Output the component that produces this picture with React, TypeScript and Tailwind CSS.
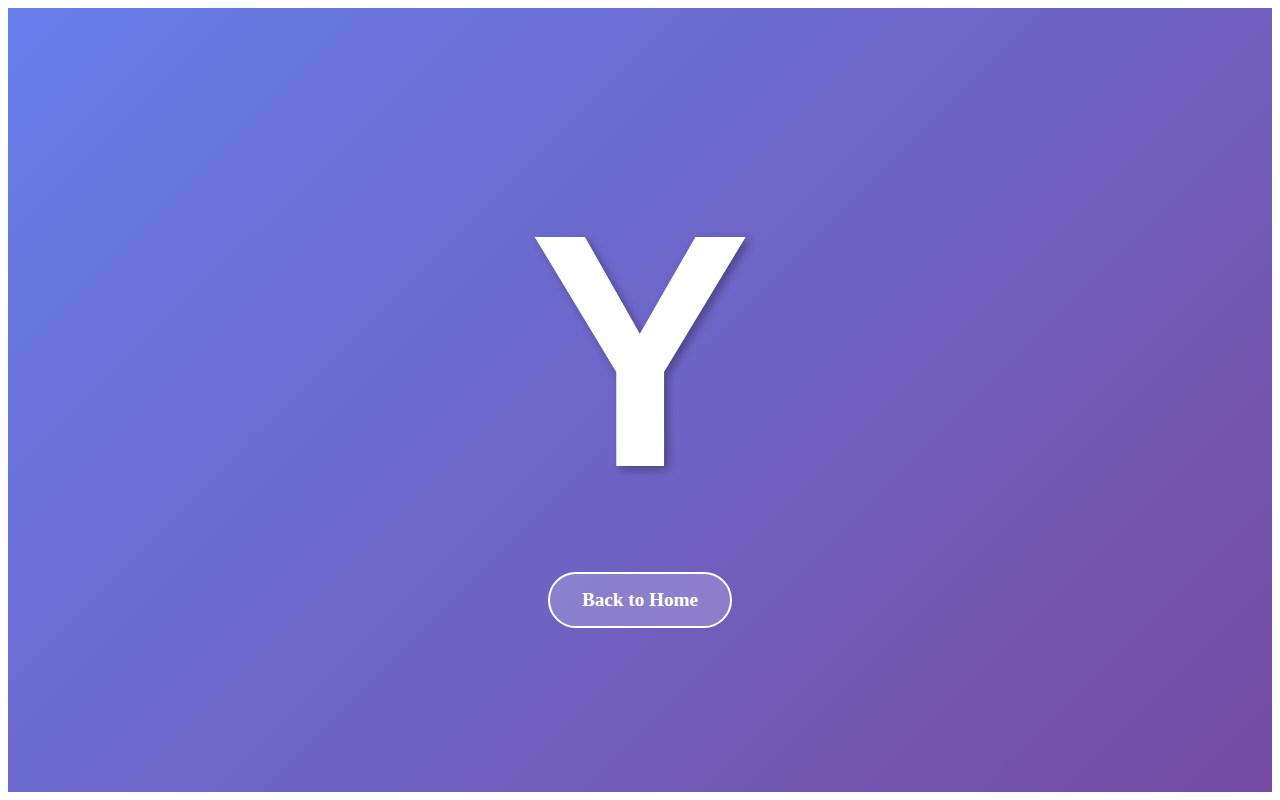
export default function App() {
    return (
        <div className="bg-white p-2 h-[800px]">
            <div className="h-full flex flex-col items-center justify-center bg-[linear-gradient(135deg,#667eea_0%,#764ba2_100%)] text-white">
                <h1 className="font-['Liberation_Sans',Arial,sans-serif] font-bold text-[333px] leading-[normal] mb-[29px] [text-shadow:4px_4px_8px_rgba(0,0,0,0.3)]">
                    Y
                </h1>
                <button className="mb-[13px] font-['Liberation_Serif','Times_New_Roman',serif] font-bold text-[19.2px] leading-[22px] px-8 py-[15px] rounded-full border-2 border-white bg-white/20 text-white">
                    Back to Home
                </button>
            </div>
        </div>
    )
}
